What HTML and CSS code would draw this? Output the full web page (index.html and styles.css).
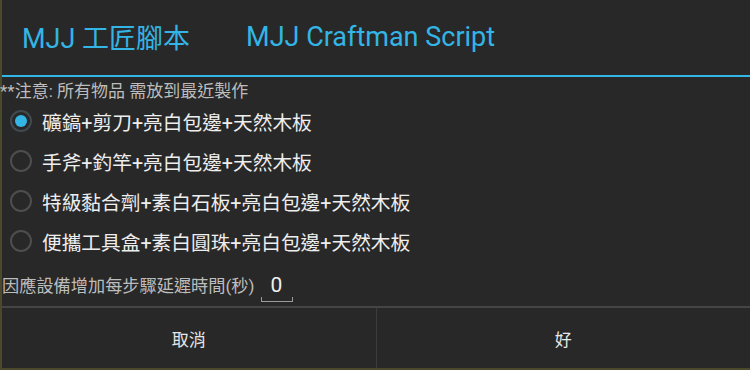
FILE: index.html
```html
<!DOCTYPE html>
<html lang="zh-Hant">
<head>
<meta charset="utf-8">
<link rel="stylesheet" href="styles.css">
</head>
<body>
<div class="dialog">
  <div class="title-bar">
    <span class="title">MJJ 工匠腳本</span>
    <span class="title title-en">MJJ Craftman Script</span>
  </div>
  <div class="title-line"></div>
  <div class="content">
    <div class="note">**注意: 所有物品 需放到最近製作</div>
    <div class="options">
      <div class="option"><span class="radio checked"></span><span class="label">礦鎬+剪刀+亮白包邊+天然木板</span></div>
      <div class="option"><span class="radio"></span><span class="label">手斧+釣竿+亮白包邊+天然木板</span></div>
      <div class="option"><span class="radio"></span><span class="label">特級黏合劑+素白石板+亮白包邊+天然木板</span></div>
      <div class="option"><span class="radio"></span><span class="label">便攜工具盒+素白圓珠+亮白包邊+天然木板</span></div>
    </div>
    <div class="delay">
      <span class="delay-label">因應設備增加每步驟延遲時間(秒)</span>
      <span class="field">0</span>
    </div>
  </div>
  <div class="buttons">
    <div class="btn">取消</div>
    <div class="btn">好</div>
  </div>
</div>
</body>
</html>
```

FILE: styles.css
```css
html, body {
  margin: 0;
  padding: 0;
  width: 750px;
  height: 370px;
  overflow: hidden;
  background: #4a4a2a;
}
body {
  font-family: Roboto, "Noto Sans CJK TC", sans-serif;
}
.dialog {
  margin-left: 2px;
  width: 748px;
  height: 368px;
  background: #282828;
  display: flex;
  flex-direction: column;
}
.title-bar {
  height: 75px;
  display: flex;
  align-items: center;
  padding-left: 20px;
  gap: 56px;
  box-sizing: border-box;
  padding-bottom: 2px;
}
.title {
  color: #33b5e5;
  font-size: 27px;
  font-family: Roboto, "Noto Sans CJK TC", sans-serif;
}
.title-line {
  height: 2px;
  background: #33b5e5;
}
.content {
  flex: 1;
  display: flex;
  flex-direction: column;
}
.note {
  margin-left: -2px;
  margin-top: 3px;
  font-size: 17px;
  line-height: 22px;
  color: #bdbdbd;
}
.options {
  display: flex;
  flex-direction: column;
  margin-top: -1px;
}
.option {
  height: 40px;
  display: flex;
  align-items: center;
  padding-left: 8px;
  gap: 10px;
}
.radio {
  width: 22px;
  height: 22px;
  border: 2px solid #4e4e4e;
  border-radius: 50%;
  box-sizing: border-box;
  position: relative;
}
.radio.checked {
  border-color: #414a50;
}
.radio.checked::after {
  content: "";
  position: absolute;
  left: 3px;
  top: 3px;
  width: 12px;
  height: 12px;
  border-radius: 50%;
  background: #33b5e5;
}
.label {
  color: #eeeeee;
  font-size: 19.7px;
}
.delay {
  display: flex;
  align-items: center;
  margin-top: 8px;
  height: 30px;
}
.delay-label {
  font-size: 17.2px;
  color: #bdbdbd;
}
.field {
  margin-left: 6px;
  width: 32px;
  height: 30px;
  text-align: center;
  color: #f0f0f0;
  font-size: 21px;
  line-height: 26px;
  border-bottom: 1px solid #9a9a9a;
  box-sizing: border-box;
  position: relative;
  top: 3px;
}
.field::before,
.field::after {
  content: "";
  position: absolute;
  bottom: 0;
  width: 1px;
  height: 4px;
  background: #9a9a9a;
}
.field::before { left: 0; }
.field::after { right: 0; }
.buttons {
  height: 60px;
  border-top: 2px solid #454545;
  display: flex;
}
.btn {
  flex: 1;
  display: flex;
  align-items: center;
  justify-content: center;
  color: #e6e6e6;
  font-size: 17px;
}
.btn + .btn {
  border-left: 1px solid #3c3c3c;
}
```
